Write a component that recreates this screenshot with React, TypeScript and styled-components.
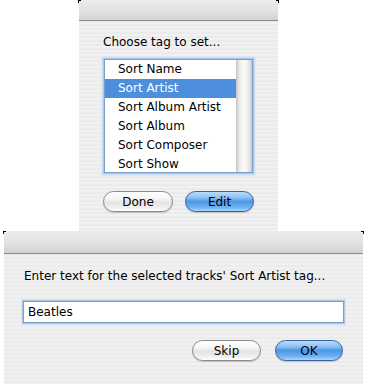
import React from "react";
import styled, { createGlobalStyle } from "styled-components";

const GlobalStyle = createGlobalStyle`
  html, body { margin: 0; padding: 0; background: #ffffff; }
  body { font-family: "DejaVu Sans", "Liberation Sans", sans-serif; font-size: 12px; color: #000; }
`;

const Page = styled.div`
  width: 368px;
  height: 384px;
  overflow: hidden;
  display: flex;
  flex-direction: column;
  align-items: flex-start;
`;

const Sheet = styled.div<{ $left: number; $width: number; $height: number }>`
  position: relative;
  margin-left: ${(p) => p.$left}px;
  width: ${(p) => p.$width}px;
  height: ${(p) => p.$height}px;
  display: flex;
  flex-direction: column;
  flex-shrink: 0;
  &::before, &::after {
    content: "";
    position: absolute;
    top: 0;
    width: 2px;
    height: 2px;
    border-top: 1px solid #000;
  }
  &::before { left: -1px; border-left: 1px solid #000; }
  &::after { right: -1px; border-right: 1px solid #000; }
`;

const TitleBar = styled.div<{ $height: number }>`
  height: ${(p) => p.$height}px;
  flex-shrink: 0;
  background: linear-gradient(to bottom, #ececec 0%, #e2e2e2 50%, #d3d3d3 100%);
  border-bottom: 1px solid #8d8d8d;
`;

const Body = styled.div<{ $pad: string }>`
  flex: 1;
  padding: ${(p) => p.$pad};
  display: flex;
  flex-direction: column;
  align-items: flex-start;
  background: repeating-linear-gradient(
    to bottom,
    #f1f1f1 0px,
    #f1f1f1 2px,
    #ebebeb 2px,
    #ebebeb 4px
  );
  border-top: 1px solid #e8e8e8;
`;

const Prompt = styled.div<{ $mb: number }>`
  line-height: 16px;
  margin-bottom: ${(p) => p.$mb}px;
  white-space: nowrap;
`;

const ListBox = styled.div`
  margin-left: 1px;
  width: 147px;
  height: 112px;
  overflow: hidden;
  border: 1px solid #7b9ec8;
  box-shadow: 0 0 0 1px #a9c8ec, 0 0 0 2px #c9dcf3, 0 0 0 3px #e0eaf6;
  background: #fff;
  display: flex;
  margin-bottom: 18px;
`;

const Rows = styled.div`
  flex: 1;
  display: flex;
  flex-direction: column;
  overflow: hidden;
`;

const Row = styled.div<{ $selected?: boolean }>`
  height: 19px;
  flex-shrink: 0;
  line-height: 19px;
  padding-left: 13px;
  white-space: nowrap;
  background: ${(p) => (p.$selected ? "#4d8fdd" : "transparent")};
  color: ${(p) => (p.$selected ? "#fff" : "#000")};
`;

const ScrollTrack = styled.div`
  width: 15px;
  background: linear-gradient(
    to right,
    #d2d2d2 0%,
    #eeeeee 20%,
    #fbfbfb 45%,
    #f0f0f0 70%,
    #d9d9d9 90%,
    #c4c4c4 100%
  );
  border-left: 1px solid #c8c8c8;
`;

const ButtonRow = styled.div<{ $gap: number; $self: string }>`
  display: flex;
  gap: ${(p) => p.$gap}px;
  align-self: ${(p) => p.$self};
`;

const Button = styled.div<{ $primary?: boolean; $w: number }>`
  width: ${(p) => p.$w}px;
  height: 21px;
  box-sizing: border-box;
  border-radius: 11px;
  display: flex;
  align-items: center;
  justify-content: center;
  font-size: 12px;
  color: #000;
  border: 1px solid ${(p) => (p.$primary ? "#3a5f9e" : "#8a8a8a")};
  background: ${(p) =>
    p.$primary
      ? "linear-gradient(to bottom, #bcdcfa 0%, #8cc0f1 30%, #4b97e6 50%, #6eb0ef 80%, #a6d7fb 100%)"
      : "linear-gradient(to bottom, #ffffff 0%, #f6f6f6 35%, #e3e3e3 55%, #f1f1f1 85%, #ffffff 100%)"};
  box-shadow: 0 1px 1px rgba(0, 0, 0, 0.18);
`;

const TextField = styled.div`
  width: 321px;
  height: 22px;
  box-sizing: border-box;
  border: 1px solid #7b9ec8;
  box-shadow: 0 0 0 1px #a9c8ec, 0 0 0 2px #d4e3f5;
  background: #fff;
  padding-left: 4px;
  line-height: 20px;
  margin-left: -1px;
  margin-bottom: 17px;
`;

const tags = [
  "Sort Name",
  "Sort Artist",
  "Sort Album Artist",
  "Sort Album",
  "Sort Composer",
  "Sort Show",
];

export default function App() {
  return (
    <>
      <GlobalStyle />
      <Page>
        <Sheet $left={79} $width={199} $height={231}>
          <TitleBar $height={20} />
          <Body $pad="12px 24px 0 24px">
            <Prompt $mb={9}>Choose tag to set...</Prompt>
            <ListBox>
              <Rows>
                {tags.map((t) => (
                  <Row key={t} $selected={t === "Sort Artist"}>
                    {t}
                  </Row>
                ))}
              </Rows>
              <ScrollTrack />
            </ListBox>
            <ButtonRow $gap={12} $self="flex-start">
              <Button $w={70}>Done</Button>
              <Button $w={69} $primary>
                Edit
              </Button>
            </ButtonRow>
          </Body>
        </Sheet>
        <Sheet $left={4} $width={359} $height={153}>
          <TitleBar $height={22} />
          <Body $pad="13px 20px 0 20px">
            <Prompt $mb={17}>
              Enter text for the selected tracks' Sort Artist tag...
            </Prompt>
            <TextField>Beatles</TextField>
            <ButtonRow $gap={14} $self="flex-end">
              <Button $w={69}>Skip</Button>
              <Button $w={68} $primary>
                OK
              </Button>
            </ButtonRow>
          </Body>
        </Sheet>
      </Page>
    </>
  );
}
